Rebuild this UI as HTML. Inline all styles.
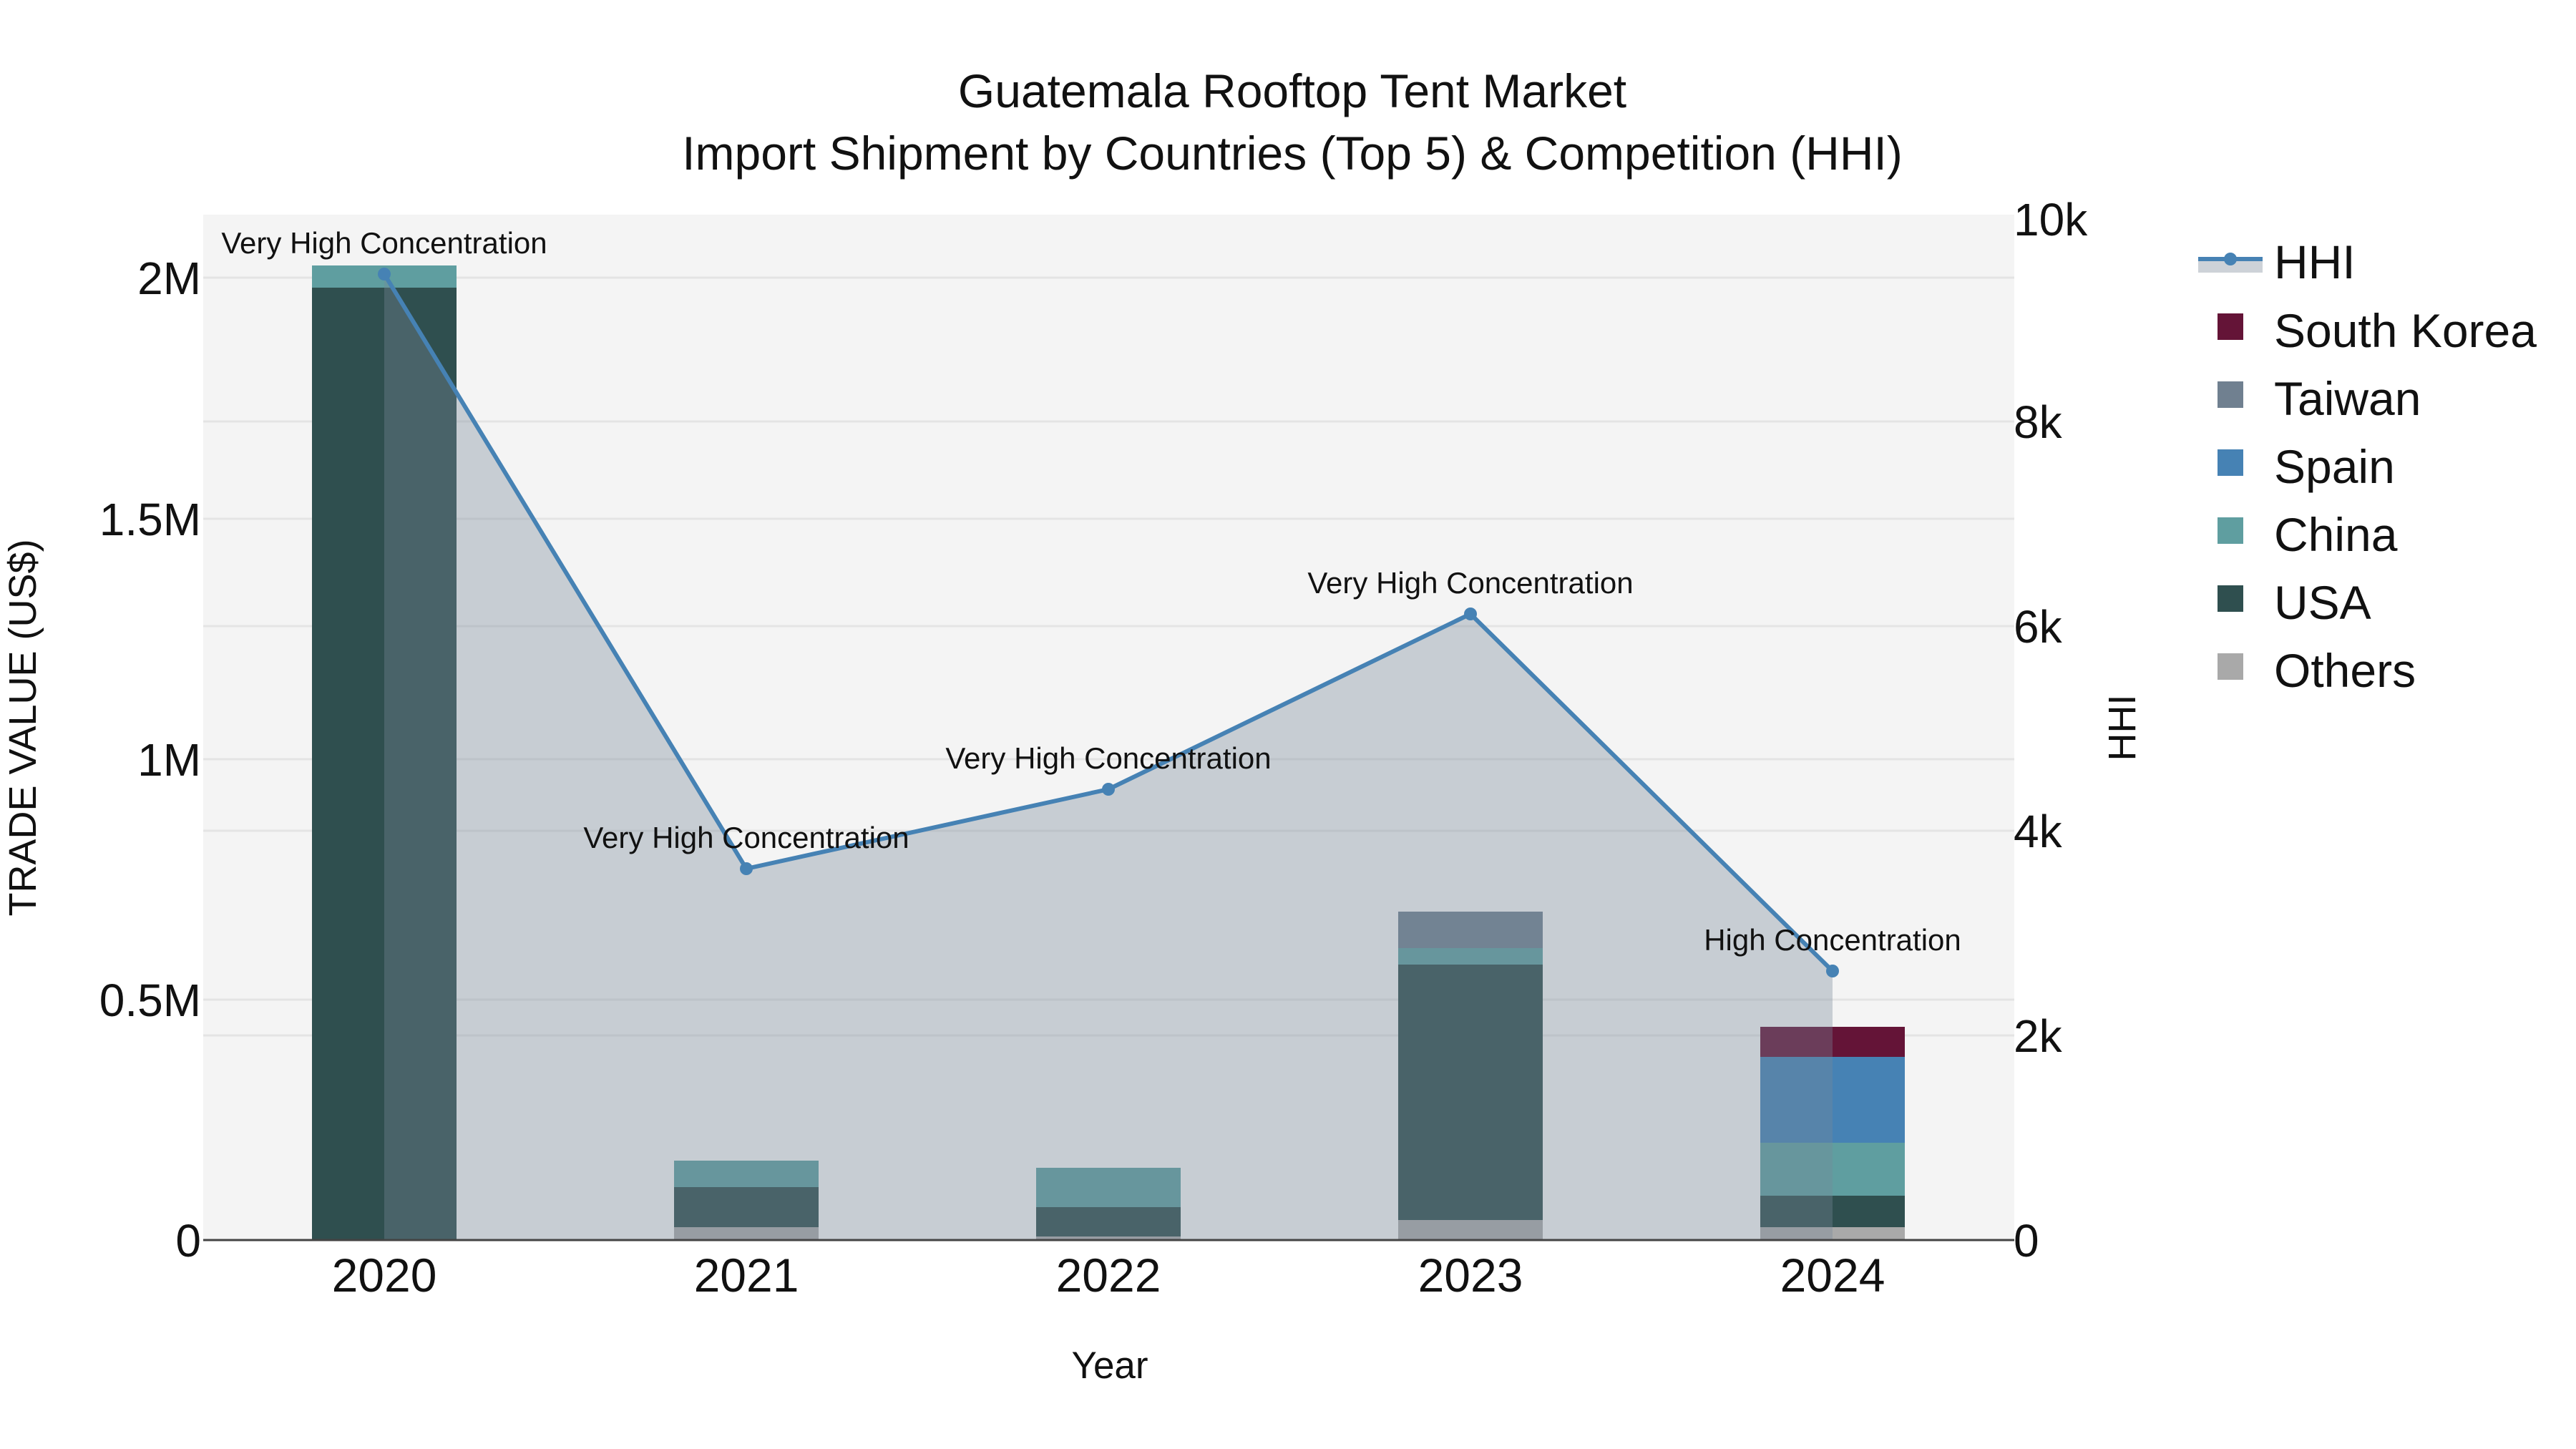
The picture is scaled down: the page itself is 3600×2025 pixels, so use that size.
<!DOCTYPE html>
<html><head><meta charset="utf-8"><style>html,body{margin:0;padding:0;background:#fff}svg{display:block}text{font-family:"Liberation Sans",sans-serif;fill:#111}</style></head>
<body>
<svg width="3600" height="2025" viewBox="0 0 3600 2025" xmlns="http://www.w3.org/2000/svg">
<rect x="284" y="300" width="2531" height="1433" fill="#f4f4f4"/>
<g stroke="#e4e4e4" stroke-width="3">
<line x1="284" x2="2815" y1="1397" y2="1397"/><line x1="284" x2="2815" y1="1061" y2="1061"/><line x1="284" x2="2815" y1="725" y2="725"/><line x1="284" x2="2815" y1="388" y2="388"/>
<line x1="284" x2="2815" y1="1447" y2="1447"/><line x1="284" x2="2815" y1="1161" y2="1161"/><line x1="284" x2="2815" y1="875" y2="875"/><line x1="284" x2="2815" y1="589" y2="589"/>
</g>
<g>
<rect x="436" y="402" width="202" height="1331" fill="#2f4f4f"/><rect x="436" y="371" width="202" height="31" fill="#5f9ea0"/>
<rect x="942" y="1715" width="202" height="18" fill="#a9a9a9"/><rect x="942" y="1659" width="202" height="56" fill="#2f4f4f"/><rect x="942" y="1622" width="202" height="37" fill="#5f9ea0"/>
<rect x="1448" y="1728" width="202" height="5" fill="#a9a9a9"/><rect x="1448" y="1687" width="202" height="41" fill="#2f4f4f"/><rect x="1448" y="1632" width="202" height="55" fill="#5f9ea0"/>
<rect x="1954" y="1705" width="202" height="28" fill="#a9a9a9"/><rect x="1954" y="1348" width="202" height="357" fill="#2f4f4f"/><rect x="1954" y="1325" width="202" height="23" fill="#5f9ea0"/><rect x="1954" y="1274" width="202" height="51" fill="#708090"/>
<rect x="2460" y="1715" width="202" height="18" fill="#a9a9a9"/><rect x="2460" y="1671" width="202" height="44" fill="#2f4f4f"/><rect x="2460" y="1597" width="202" height="74" fill="#5f9ea0"/><rect x="2460" y="1477" width="202" height="120" fill="#4682b4"/><rect x="2460" y="1435" width="202" height="42" fill="#641437"/>
</g>
<polygon points="537,383 1043,1214 1549,1103 2055,858 2561,1357 2561,1733 537,1733" fill="rgba(119,136,153,0.36)"/>
<line x1="284" x2="2815" y1="1733" y2="1733" stroke="#444" stroke-width="3"/>
<polyline points="537,383 1043,1214 1549,1103 2055,858 2561,1357" fill="none" stroke="#4682b4" stroke-width="6"/>
<g fill="#4682b4"><circle cx="537" cy="383" r="9"/><circle cx="1043" cy="1214" r="9"/><circle cx="1549" cy="1103" r="9"/><circle cx="2055" cy="858" r="9"/><circle cx="2561" cy="1357" r="9"/></g>
<g font-size="42" text-anchor="middle">
<text x="537" y="354">Very High Concentration</text>
<text x="1043" y="1185">Very High Concentration</text>
<text x="1549" y="1074">Very High Concentration</text>
<text x="2055" y="829">Very High Concentration</text>
<text x="2561" y="1328">High Concentration</text>
</g>
<g font-size="66" text-anchor="middle">
<text x="1806" y="150">Guatemala Rooftop Tent Market</text>
<text x="1806" y="237">Import Shipment by Countries (Top 5) &amp; Competition (HHI)</text>
</g>
<g font-size="64" text-anchor="end">
<text x="281" y="1756">0</text><text x="281" y="1420">0.5M</text><text x="281" y="1084">1M</text><text x="281" y="748">1.5M</text><text x="281" y="411">2M</text>
</g>
<g font-size="64" text-anchor="start">
<text x="2814" y="1756">0</text><text x="2814" y="1470">2k</text><text x="2814" y="1184">4k</text><text x="2814" y="898">6k</text><text x="2814" y="612">8k</text><text x="2814" y="329">10k</text>
</g>
<g font-size="66" text-anchor="middle">
<text x="537" y="1805">2020</text><text x="1043" y="1805">2021</text><text x="1549" y="1805">2022</text><text x="2055" y="1805">2023</text><text x="2561" y="1805">2024</text>
</g>
<text x="1551" y="1926" font-size="53" text-anchor="middle">Year</text>
<text transform="translate(50,1017) rotate(-90)" font-size="54" text-anchor="middle">TRADE VALUE (US$)</text>
<text transform="translate(2984,1017) rotate(-90)" font-size="54" text-anchor="middle">HHI</text>
<rect x="3072" y="362" width="90" height="19" fill="#cdd2d8"/>
<line x1="3072" x2="3162" y1="362" y2="362" stroke="#4682b4" stroke-width="6"/>
<circle cx="3117" cy="362" r="9" fill="#4682b4"/>
<g font-size="66">
<text x="3178" y="389">HHI</text>
<text x="3178" y="485">South Korea</text>
<text x="3178" y="580">Taiwan</text>
<text x="3178" y="675">Spain</text>
<text x="3178" y="770">China</text>
<text x="3178" y="865">USA</text>
<text x="3178" y="960">Others</text>
</g>
<rect x="3099" y="438" width="36" height="37" fill="#641437"/>
<rect x="3099" y="533" width="36" height="37" fill="#708090"/>
<rect x="3099" y="628" width="36" height="37" fill="#4682b4"/>
<rect x="3099" y="723" width="36" height="37" fill="#5f9ea0"/>
<rect x="3099" y="818" width="36" height="37" fill="#2f4f4f"/>
<rect x="3099" y="913" width="36" height="37" fill="#a9a9a9"/>
</svg>
</body></html>
